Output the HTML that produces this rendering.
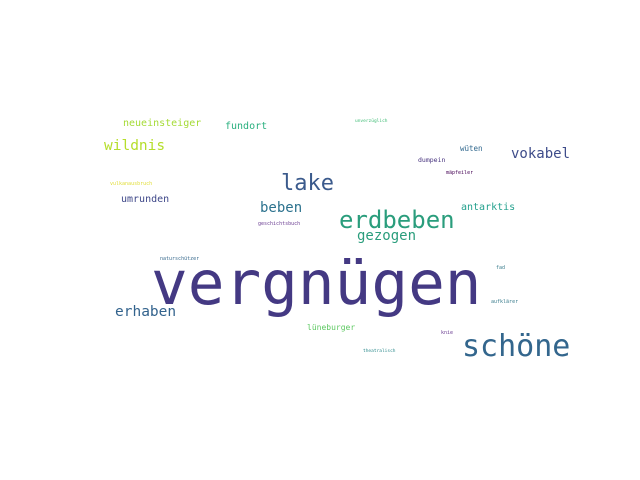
<!DOCTYPE html>
<html><head><meta charset="utf-8"><style>
body{margin:0;width:640px;height:480px;background:#fff;position:relative;overflow:hidden;font-family:"DejaVu Sans Mono","Liberation Mono",monospace}
div{position:absolute;line-height:1;white-space:nowrap}
</style></head><body>
<div style="left:151px;top:253px;font-size:61px;color:#443983">vergnügen</div>
<div style="left:462px;top:332px;font-size:30px;color:#33668d">schöne</div>
<div style="left:339px;top:208px;font-size:24px;color:#2a9d7c">erdbeben</div>
<div style="left:281px;top:173px;font-size:22px;color:#3b5a8c">lake</div>
<div style="left:104px;top:139px;font-size:14.5px;color:#b5de2b">wildnis</div>
<div style="left:511px;top:147px;font-size:14px;color:#3e4c8a">vokabel</div>
<div style="left:115px;top:305px;font-size:14.5px;color:#33638d">erhaben</div>
<div style="left:260px;top:201px;font-size:14px;color:#2c728e">beben</div>
<div style="left:357px;top:229px;font-size:14px;color:#2a9d7c">gezogen</div>
<div style="left:461px;top:203px;font-size:10px;color:#25a18e">antarktis</div>
<div style="left:121px;top:195px;font-size:10px;color:#3f4889">umrunden</div>
<div style="left:123px;top:119px;font-size:10px;color:#a5db36">neueinsteiger</div>
<div style="left:225px;top:122px;font-size:10px;color:#2ab07f">fundort</div>
<div style="left:307px;top:324px;font-size:8px;color:#5ec962">lüneburger</div>
<div style="left:460px;top:145px;font-size:7.5px;color:#31688e">wüten</div>
<div style="left:418px;top:157px;font-size:6.5px;color:#46327e">dumpein</div>
<div style="left:446px;top:171px;font-size:5px;color:#440154">mäpfeiler</div>
<div style="left:355px;top:120px;font-size:4.5px;color:#3dbc74">unverzüglich</div>
<div style="left:110px;top:182px;font-size:5px;color:#e1dd37">vulkanausbruch</div>
<div style="left:258px;top:222px;font-size:5px;color:#6b3e92">geschichtsbuch</div>
<div style="left:160px;top:257px;font-size:5px;color:#3a6b8e">naturschützer</div>
<div style="left:496px;top:266px;font-size:5px;color:#3b7d8d">fad</div>
<div style="left:491px;top:300px;font-size:5px;color:#3b7d8d">aufklärer</div>
<div style="left:441px;top:331px;font-size:5px;color:#6b3e92">knie</div>
<div style="left:363px;top:350px;font-size:4.5px;color:#2e8b8d">theatralisch</div>
</body></html>
